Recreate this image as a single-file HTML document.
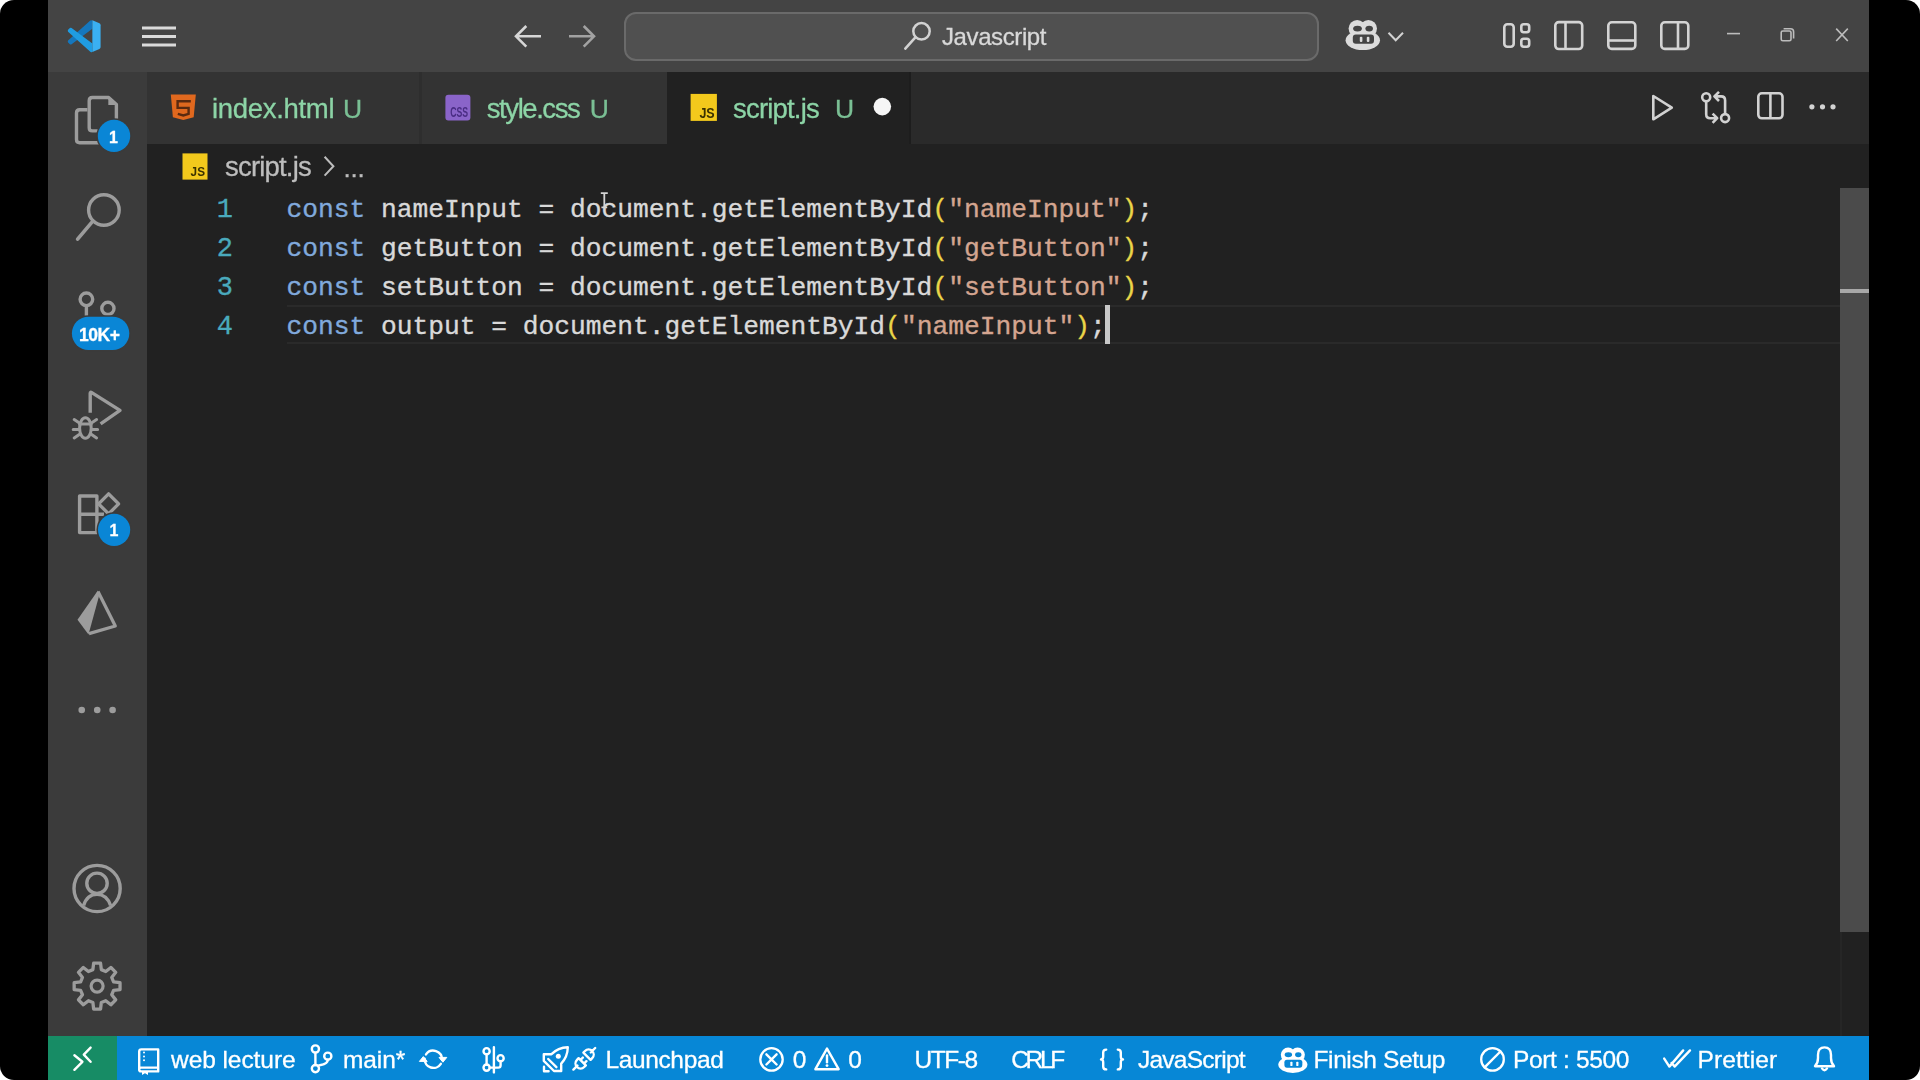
<!DOCTYPE html>
<html><head><meta charset="utf-8">
<style>
*{margin:0;padding:0;box-sizing:border-box}
html,body{width:1920px;height:1080px;overflow:hidden;background:#fff}
body{position:relative;font-family:"Liberation Sans",sans-serif}
.a{position:absolute}
#frame{position:absolute;left:0;top:0;width:1920px;height:1080px;background:#000;border-radius:14px;overflow:hidden;filter:blur(0.45px)}
.t{position:absolute;white-space:pre;line-height:1;-webkit-text-stroke:0.3px currentColor}
.code{position:absolute;left:286.5px;font-family:"Liberation Mono",monospace;font-size:26.25px;white-space:pre;color:#d9d9d9;line-height:39px;height:39px;-webkit-text-stroke:0.35px currentColor}
.ln{position:absolute;font-family:"Liberation Mono",monospace;font-size:27px;color:#4aaabd;line-height:39px;-webkit-text-stroke:0.3px currentColor;width:40px;text-align:right;left:193px}
.k{color:#80a9dc}.s{color:#d4a590}.p{color:#ead548}
svg{position:absolute;left:0;top:0}
</style></head><body>
<div id="frame">
<div class="a" style="left:48px;top:0;width:1821px;height:72px;background:#444444"></div>
<div class="a" style="left:48px;top:72px;width:99px;height:964px;background:#3b3b3b"></div>
<div class="a" style="left:147px;top:72px;width:1722px;height:72px;background:#2a2a2a"></div>
<div class="a" style="left:147px;top:144px;width:1722px;height:892px;background:#212121"></div>
<div class="a" style="left:48px;top:1036px;width:1821px;height:44px;background:#0787d6"></div>
<div class="a" style="left:48px;top:1036px;width:69px;height:44px;background:#178c65"></div>
<div class="a" style="left:147px;top:72px;width:272px;height:72px;background:#333333"></div>
<div class="a" style="left:419px;top:72px;width:2.5px;height:72px;background:#2e2e2e"></div>
<div class="a" style="left:421.5px;top:72px;width:245.5px;height:72px;background:#333333"></div>
<div class="a" style="left:667px;top:72px;width:244px;height:72px;background:#212121"></div>
<div class="a" style="left:908.5px;top:72px;width:2px;height:72px;background:#1d1d1d"></div>
<!-- search box -->
<div class="a" style="left:624px;top:12px;width:695px;height:49px;border-radius:12px;background:#505050;border:2px solid #6a6a6a"></div>
<!-- current line highlight -->
<div class="a" style="left:287px;top:305px;width:1576px;height:39px;border-top:2px solid #2a2a2a;border-bottom:2px solid #2a2a2a"></div>
<!-- scrollbar -->
<div class="a" style="left:1840px;top:188px;width:29px;height:744px;background:#4b4b4b"></div>
<div class="a" style="left:1840px;top:289px;width:29px;height:4px;background:#a8a8a8"></div>
<div class="a" style="left:1840px;top:932px;width:2px;height:104px;background:#262626"></div>
<!-- cursor -->
<div class="a" style="left:1105px;top:305px;width:5px;height:39px;background:#c8c8c8"></div>
<div class="code" style="top:191px"><span class="k">const</span> nameInput = document.getElementById<span class="p">(</span><span class="s">"nameInput"</span><span class="p">)</span>;</div>
<div class="ln" style="top:191px">1</div>
<div class="code" style="top:230px"><span class="k">const</span> getButton = document.getElementById<span class="p">(</span><span class="s">"getButton"</span><span class="p">)</span>;</div>
<div class="ln" style="top:230px">2</div>
<div class="code" style="top:269px"><span class="k">const</span> setButton = document.getElementById<span class="p">(</span><span class="s">"setButton"</span><span class="p">)</span>;</div>
<div class="ln" style="top:269px">3</div>
<div class="code" style="top:308px"><span class="k">const</span> output = document.getElementById<span class="p">(</span><span class="s">"nameInput"</span><span class="p">)</span>;</div>
<div class="ln" style="top:308px">4</div>
<svg width="1920" height="1080" viewBox="0 0 1920 1080"><g transform="translate(67.6 19.8) scale(0.33 0.326)"><path d="M68.8 2.1 L75 1 V27.3 L12.2 75 Q9 77 6.9 74.8 L1.4 69.7 Q-0.5 66 1.4 63.6 Z" fill="#1577bd"/><path d="M6.9 25.2 Q9 23 12.2 25 L75 72.7 V99.1 Q72 100.5 68.8 97.9 L1.4 36.4 Q-0.5 33 1.4 30.3 Z" fill="#1f9ce2"/><path d="M75 1 L96.5 10.8 Q100 12.5 100 16.4 V83.6 Q100 87.5 96.5 89.2 L75 99.1 Z" fill="#3ab0f2"/></g>
<line x1="142" y1="28" x2="176" y2="28" stroke="#dadada" stroke-width="3"/>
<line x1="142" y1="36.5" x2="176" y2="36.5" stroke="#dadada" stroke-width="3"/>
<line x1="142" y1="45" x2="176" y2="45" stroke="#dadada" stroke-width="3"/>
<path d="M541 36.3 H516.5 M526.3 26 L516 36.3 L526.3 46.6" stroke="#d6d6d6" stroke-width="2.6" fill="none"/>
<path d="M569 36.3 H593.5 M583.7 26 L594 36.3 L583.7 46.6" stroke="#a2a2a2" stroke-width="2.6" fill="none"/>
<circle cx="921.5" cy="31.3" r="8.2" stroke="#d2d2d2" stroke-width="2.5" fill="none"/><line x1="915.6" y1="37.2" x2="905.3" y2="48.6" stroke="#d2d2d2" stroke-width="2.6" stroke-linecap="round"/>
<g transform="translate(1345.6 20) scale(1.0)"><circle cx="11.6" cy="8.6" r="8.6" fill="#dcdcdc"/><circle cx="22.8" cy="8.6" r="8.6" fill="#dcdcdc"/><ellipse cx="17.2" cy="20.2" rx="17.2" ry="9.8" fill="#dcdcdc"/><ellipse cx="11.9" cy="8.6" rx="4.4" ry="2.9" fill="#444444"/><ellipse cx="23.6" cy="8.6" rx="3.8" ry="2.9" fill="#444444"/><rect x="7.2" y="14.5" width="21.2" height="9.3" rx="3" fill="#444444"/><rect x="14.2" y="16.7" width="2.6" height="5.3" rx="1" fill="#dcdcdc"/><rect x="21.2" y="16.7" width="2.6" height="5.3" rx="1" fill="#dcdcdc"/></g>
<polyline points="1388.5,32.8 1395.7,40.2 1403,32.8" stroke="#d2d2d2" stroke-width="2" fill="none"/>
<rect x="1504.3" y="24.3" width="9.4" height="22.4" rx="3" stroke="#d4d4d4" stroke-width="2.6" fill="none"/>
<rect x="1521.3" y="24.3" width="7.9" height="7.9" rx="2.4" stroke="#d4d4d4" stroke-width="2.6" fill="none"/><rect x="1521.3" y="38.8" width="7.9" height="7.9" rx="2.4" stroke="#d4d4d4" stroke-width="2.6" fill="none"/>
<rect x="1555.3" y="22.1" width="26.9" height="26.9" rx="3.5" stroke="#d4d4d4" stroke-width="2.6" fill="none"/><line x1="1565.5" y1="22.1" x2="1565.5" y2="49" stroke="#d4d4d4" stroke-width="2.6" fill="none"/>
<rect x="1608.3" y="22.3" width="27" height="26.6" rx="3.5" stroke="#d4d4d4" stroke-width="2.6" fill="none"/><line x1="1608.3" y1="40.5" x2="1635.3" y2="40.5" stroke="#d4d4d4" stroke-width="2.6" fill="none"/>
<rect x="1661.3" y="22.3" width="27" height="26.6" rx="3.5" stroke="#d4d4d4" stroke-width="2.6" fill="none"/><line x1="1678" y1="22.3" x2="1678" y2="48.9" stroke="#d4d4d4" stroke-width="2.6" fill="none"/>
<line x1="1727" y1="33.6" x2="1740" y2="33.6" stroke="#bcbcbc" stroke-width="1.6" fill="none"/>
<rect x="1781.2" y="31" width="9.8" height="9.8" rx="1.6" stroke="#bcbcbc" stroke-width="1.6" fill="none"/><path d="M1783.6 28.7 H1790.6 Q1793.6 28.7 1793.6 31.7 V38.4" stroke="#bcbcbc" stroke-width="1.6" fill="none"/>
<path d="M1836.2 28.6 L1847.8 41 M1847.8 28.6 L1836.2 41" stroke="#bcbcbc" stroke-width="1.6" fill="none"/>
<path d="M170.8 94.4 H195.8 L193.7 117.2 L183.3 119.9 L172.9 117.2 Z" fill="#e0681e"/>
<path d="M190.8 101.3 H177.6 V107.9 H188.6 V113.9 L183.3 115.4 L177.8 113.9" stroke="#5a2a10" stroke-width="2.4" fill="none"/>
<rect x="445.4" y="94.8" width="25" height="25.6" rx="3" fill="#8a64c9"/>
<text x="450.2" y="117.4" font-family="Liberation Sans" font-weight="700" font-size="15.5" fill="#4a2d84" textLength="18" lengthAdjust="spacingAndGlyphs">CSS</text>
<rect x="690.6" y="93.9" width="26.3" height="27" fill="#f3c91c"/><text x="699.4" y="118.0" font-family="Liberation Sans" font-weight="700" font-size="14.5" fill="#3b3200" textLength="15.300000000000068" lengthAdjust="spacingAndGlyphs">JS</text>
<rect x="182.5" y="153.4" width="25" height="26.2" fill="#f3c91c"/><text x="190.6" y="175.9" font-family="Liberation Sans" font-weight="700" font-size="12.5" fill="#3b3200" textLength="14.400000000000006" lengthAdjust="spacingAndGlyphs">JS</text>
<circle cx="882.3" cy="106.6" r="8.8" fill="#f6f6f6"/>
<path d="M1653.3 96 V119.3 L1671.8 107.6 Z" stroke="#d2d2d2" stroke-width="2.6" fill="none" stroke-linejoin="round"/>
<circle cx="1706.2" cy="97.2" r="4" stroke="#d2d2d2" stroke-width="2.6" fill="none" stroke-linejoin="round"/><circle cx="1725.1" cy="118.1" r="4" stroke="#d2d2d2" stroke-width="2.6" fill="none" stroke-linejoin="round"/>
<path d="M1706.2 101.2 V114.2 Q1706.2 118.2 1710.2 118.2 H1717 M1712.6 113.6 L1717.2 118.2 L1712.6 122.8" stroke="#d2d2d2" stroke-width="2.6" fill="none" stroke-linejoin="round"/>
<path d="M1725.1 114.1 V100.4 Q1725.1 96.4 1721.1 96.4 H1714.6 M1719 91.8 L1714.4 96.4 L1719 101" stroke="#d2d2d2" stroke-width="2.6" fill="none" stroke-linejoin="round"/>
<rect x="1758.3" y="93.3" width="24.2" height="25" rx="3.5" stroke="#d2d2d2" stroke-width="2.6" fill="none" stroke-linejoin="round"/><line x1="1770.4" y1="93.3" x2="1770.4" y2="118.3" stroke="#d2d2d2" stroke-width="2.6" fill="none" stroke-linejoin="round"/>
<circle cx="1811.9" cy="106.8" r="2.6" fill="#d2d2d2"/>
<circle cx="1822.5" cy="106.8" r="2.6" fill="#d2d2d2"/>
<circle cx="1833" cy="106.8" r="2.6" fill="#d2d2d2"/>
<polyline points="324.6,156.8 333.4,166.2 324.6,175.6" stroke="#bdbdbd" stroke-width="2" fill="none"/>
<path d="M116.4 126 V104.6 L108.6 97.5 H92.4 Q89.2 97.5 89.2 100.7 V127.7 Q89.2 130.9 92.4 130.9 H104" stroke="#9c9c9c" stroke-width="3.4" fill="none" stroke-linejoin="round"/>
<path d="M108.3 97.4 L116.6 104.9 H108.3 Z" fill="#9c9c9c"/>
<path d="M87.4 109.8 H79.7 Q76.5 109.8 76.5 113 V139.6 Q76.5 142.8 79.7 142.8 H104" stroke="#9c9c9c" stroke-width="3.4" fill="none" stroke-linejoin="round"/>
<circle cx="114" cy="135.9" r="17.7" fill="#3b3b3b"/><circle cx="114" cy="135.9" r="16.2" fill="#0a86d6"/>
<circle cx="103.9" cy="210" r="15.3" stroke="#9c9c9c" stroke-width="3.4" fill="none" stroke-linejoin="round"/><line x1="92.6" y1="221.4" x2="77.6" y2="239.2" stroke="#9c9c9c" stroke-width="3.6" stroke-linecap="round"/>
<circle cx="86.4" cy="299.3" r="6.3" stroke="#9c9c9c" stroke-width="3.4" fill="none" stroke-linejoin="round"/><line x1="86.4" y1="305.6" x2="86.4" y2="320" stroke="#9c9c9c" stroke-width="3.4" fill="none" stroke-linejoin="round"/><circle cx="107.9" cy="308.4" r="6.1" stroke="#9c9c9c" stroke-width="3.4" fill="none" stroke-linejoin="round"/>
<rect x="70.4" y="315.2" width="60.4" height="36.3" rx="18.1" fill="#3b3b3b"/><rect x="71.9" y="316.7" width="57.4" height="33.3" rx="16.6" fill="#0a86d6"/>
<path d="M90.2 412.8 V393.2 Q90.2 391.6 91.8 392.6 L120 410.4 L100.6 423.8" stroke="#9c9c9c" stroke-width="3.4" fill="none" stroke-linejoin="round"/>
<ellipse cx="85.4" cy="428" rx="5.8" ry="10.2" stroke="#9c9c9c" stroke-width="3" fill="none" stroke-linecap="round"/><line x1="79.6" y1="424" x2="91.2" y2="424" stroke="#9c9c9c" stroke-width="3" fill="none" stroke-linecap="round"/>
<path d="M74.2 419.6 L79.4 423 M96.6 419.6 L91.4 423 M73.2 429.4 H79.2 M97.6 429.4 H91.6 M74.2 438 L79.6 434.2 M96.6 438 L91.2 434.2" stroke="#9c9c9c" stroke-width="3" fill="none" stroke-linecap="round"/>
<path d="M79.6 496 H96.9 V532.6 H79.6 Z M79.6 514.3 H104" stroke="#9c9c9c" stroke-width="3.4" fill="none" stroke-linejoin="round"/>
<path d="M108.6 493.9 L118.6 503.9 L108.6 513.9 L98.6 503.9 Z" stroke="#9c9c9c" stroke-width="3.4" fill="none" stroke-linejoin="round"/>
<circle cx="114.1" cy="529.8" r="17.6" fill="#3b3b3b"/><circle cx="114.1" cy="529.8" r="16.1" fill="#0a86d6"/>
<path d="M97.9 590.5 L77.5 619.8 L88.5 634.5 L99.3 595 Z" fill="#9c9c9c"/>
<path d="M98 591.5 L115.3 626 L89 633.6" stroke="#9c9c9c" stroke-width="3.2" fill="none" stroke-linejoin="round"/>
<circle cx="81.75" cy="710" r="3.3" fill="#9c9c9c"/>
<circle cx="97.25" cy="710" r="3.3" fill="#9c9c9c"/>
<circle cx="112.6" cy="710" r="3.3" fill="#9c9c9c"/>
<circle cx="97.1" cy="888.5" r="23.1" stroke="#9c9c9c" stroke-width="3.4" fill="none" stroke-linejoin="round"/><circle cx="97" cy="883.3" r="10.2" stroke="#9c9c9c" stroke-width="3.4" fill="none" stroke-linejoin="round"/>
<path d="M83.6 905.5 C86 898 91 894.4 97 894.4 C103 894.4 108 898 110.6 905.5" stroke="#9c9c9c" stroke-width="3.4" fill="none" stroke-linejoin="round"/>
<polygon points="93.65,963.16 100.55,963.16 101.33,969.63 105.75,971.47 110.88,967.44 115.76,972.32 111.73,977.45 113.57,981.87 120.04,982.65 120.04,989.55 113.57,990.33 111.73,994.75 115.76,999.88 110.88,1004.76 105.75,1000.73 101.33,1002.57 100.55,1009.04 93.65,1009.04 92.87,1002.57 88.45,1000.73 83.32,1004.76 78.44,999.88 82.47,994.75 80.63,990.33 74.16,989.55 74.16,982.65 80.63,981.87 82.47,977.45 78.44,972.32 83.32,967.44 88.45,971.47 92.87,969.63" stroke="#9c9c9c" stroke-width="3.3" fill="none" stroke-linejoin="round"/>
<circle cx="97.1" cy="986.1" r="6.0" stroke="#9c9c9c" stroke-width="3.2" fill="none"/>
<path d="M74.4 1055.2 L82.4 1061.8 L74.4 1069.8 M90.6 1047.6 L83.8 1054.6 L90.6 1061.8" stroke="#ffffff" stroke-width="2.4" fill="none" stroke-linejoin="round" stroke-linecap="round"/>
<path d="M139.2 1070.2 V1051.6 Q139.2 1049.4 141.4 1049.4 H158.2 V1067.6 H141 Q139.2 1067.6 139.2 1069.4 Q139.2 1071.4 141.2 1071.4 H158.2 V1067.6" stroke="#ffffff" stroke-width="2.4" fill="none" stroke-linejoin="round" stroke-linecap="round"/>
<path d="M142.6 1071 V1074 L145 1072.4 L147.4 1074 V1071" fill="#ffffff" stroke="#ffffff" stroke-width="1.2"/>
<circle cx="144" cy="1052.6" r="1" fill="#ffffff"/>
<circle cx="144" cy="1056.4" r="1" fill="#ffffff"/>
<circle cx="144" cy="1060.2" r="1" fill="#ffffff"/>
<circle cx="315.4" cy="1049" r="3.6" stroke="#ffffff" stroke-width="2.4" fill="none" stroke-linejoin="round" stroke-linecap="round"/><circle cx="315.4" cy="1068.6" r="3.6" stroke="#ffffff" stroke-width="2.4" fill="none" stroke-linejoin="round" stroke-linecap="round"/><circle cx="327.8" cy="1056.2" r="3.6" stroke="#ffffff" stroke-width="2.4" fill="none" stroke-linejoin="round" stroke-linecap="round"/>
<path d="M315.4 1052.6 V1065 M327.8 1059.8 Q327.8 1064.4 318 1065.6" stroke="#ffffff" stroke-width="2.4" fill="none" stroke-linejoin="round" stroke-linecap="round"/>
<path d="M426.0 1054.4 A8.8 8.8 0 0 1 441.97 1059.8" stroke="#ffffff" stroke-width="2.4" fill="none" stroke-linejoin="round" stroke-linecap="round"/><path d="M439.0 1057.4 H446.8 L442.9 1062.2 Z" fill="#ffffff" stroke="#ffffff" stroke-width="1" stroke-linejoin="round"/>
<path d="M440.84 1063.83 A8.8 8.8 0 0 1 424.63 1058.8" stroke="#ffffff" stroke-width="2.4" fill="none" stroke-linejoin="round" stroke-linecap="round"/><path d="M419.4 1061.4 H427.2 L423.3 1056.6 Z" fill="#ffffff" stroke="#ffffff" stroke-width="1" stroke-linejoin="round"/>
<circle cx="486.6" cy="1051.2" r="3.1" stroke="#ffffff" stroke-width="2.4" fill="none" stroke-linejoin="round" stroke-linecap="round"/><circle cx="486.6" cy="1067.6" r="3.1" stroke="#ffffff" stroke-width="2.4" fill="none" stroke-linejoin="round" stroke-linecap="round"/><circle cx="500.6" cy="1058.2" r="3.1" stroke="#ffffff" stroke-width="2.4" fill="none" stroke-linejoin="round" stroke-linecap="round"/>
<path d="M486.6 1054.3 V1064.5 M493.9 1047.2 V1072.4 M500.6 1061.3 V1065.2 Q500.6 1067.6 498.2 1067.6 H489.7" stroke="#ffffff" stroke-width="2.4" fill="none" stroke-linejoin="round" stroke-linecap="round"/>
<path d="M543.8 1054.2 H551.5 Q558 1047.6 567.8 1047.3 Q567.6 1057 561.2 1063.6 V1071 H554 L543.8 1060.8 Z M548.2 1059 L556.4 1067.2" stroke="#ffffff" stroke-width="2.4" fill="none" stroke-linejoin="round" stroke-linecap="round"/>
<circle cx="558.3" cy="1056.3" r="2.5" fill="#ffffff"/>
<path d="M544 1066.8 V1071.2 H548.6" stroke="#ffffff" stroke-width="2.4" fill="none" stroke-linejoin="round" stroke-linecap="round"/>
<path d="M578.6 1058.2 L585.8 1065.4 L584.2 1067 A5.09 5.09 0 0 1 577 1059.8 Z M580.4 1060 L582.8 1057.6 M584 1063.6 L586.4 1061.2 M573.4 1069.6 L577.4 1065.6" stroke="#ffffff" stroke-width="2.4" fill="none" stroke-linejoin="round" stroke-linecap="round"/>
<path d="M583.4 1052.6 L590.6 1059.8 L592.2 1058.2 A5.09 5.09 0 0 0 585 1051 Z M590.8 1052.4 L595.2 1048" stroke="#ffffff" stroke-width="2.4" fill="none" stroke-linejoin="round" stroke-linecap="round"/>
<circle cx="771.5" cy="1059.4" r="11.2" stroke="#ffffff" stroke-width="2.3" fill="none"/><path d="M766.4 1054.3 L776.6 1064.5 M776.6 1054.3 L766.4 1064.5" stroke="#ffffff" stroke-width="2.4" fill="none" stroke-linejoin="round" stroke-linecap="round"/>
<path d="M827 1048.6 L838.6 1069.2 H815.4 Z" stroke="#ffffff" stroke-width="2.4" fill="none" stroke-linejoin="round" stroke-linecap="round"/><line x1="827" y1="1055.4" x2="827" y2="1062.2" stroke="#ffffff" stroke-width="2.4" fill="none" stroke-linejoin="round" stroke-linecap="round"/><circle cx="827" cy="1065.6" r="1.4" fill="#ffffff"/>
<path d="M1106.2 1049.6 Q1103.2 1049.6 1103.2 1052.6 V1056.6 Q1103.2 1059.4 1101 1059.4 Q1103.2 1059.4 1103.2 1062.2 V1066.4 Q1103.2 1069.4 1106.2 1069.4 M1117.8 1049.6 Q1120.8 1049.6 1120.8 1052.6 V1056.6 Q1120.8 1059.4 1123 1059.4 Q1120.8 1059.4 1120.8 1062.2 V1066.4 Q1120.8 1069.4 1117.8 1069.4" stroke="#ffffff" stroke-width="2.4" fill="none" stroke-linejoin="round" stroke-linecap="round"/>
<g transform="translate(1278.3 1047.5) scale(0.846)"><circle cx="11.6" cy="8.6" r="8.6" fill="#ffffff"/><circle cx="22.8" cy="8.6" r="8.6" fill="#ffffff"/><ellipse cx="17.2" cy="20.2" rx="17.2" ry="9.8" fill="#ffffff"/><ellipse cx="11.9" cy="8.6" rx="4.4" ry="2.9" fill="#0787d6"/><ellipse cx="23.6" cy="8.6" rx="3.8" ry="2.9" fill="#0787d6"/><rect x="7.2" y="14.5" width="21.2" height="9.3" rx="3" fill="#0787d6"/><rect x="14.2" y="16.7" width="2.6" height="5.3" rx="1" fill="#ffffff"/><rect x="21.2" y="16.7" width="2.6" height="5.3" rx="1" fill="#ffffff"/></g>
<circle cx="1492.5" cy="1059.4" r="11.3" stroke="#ffffff" stroke-width="2.3" fill="none"/><line x1="1484.6" y1="1067.3" x2="1500.4" y2="1051.5" stroke="#ffffff" stroke-width="2.4" fill="none" stroke-linejoin="round" stroke-linecap="round"/>
<path d="M1664.2 1058.6 L1669.4 1066.6 L1683.2 1050.4 M1671.6 1063 L1674.6 1066.6 L1690 1050.4" stroke="#ffffff" stroke-width="2.4" fill="none" stroke-linejoin="round" stroke-linecap="round"/>
<path d="M1815 1066.2 H1834 Q1831 1063.2 1831 1058 V1055 Q1831 1047.4 1824.5 1047.4 Q1818 1047.4 1818 1055 V1058 Q1818 1063.2 1815 1066.2 Z" stroke="#ffffff" stroke-width="2.4" fill="none" stroke-linejoin="round" stroke-linecap="round"/><path d="M1822 1068.4 Q1824.5 1072 1827 1068.4" stroke="#ffffff" stroke-width="2.4" fill="none" stroke-linejoin="round" stroke-linecap="round"/>
<path d="M600.8 193.2 H607.8 M604.3 193.2 V207.4 M601.4 207.4 H607.2" stroke="#d4d4d4" stroke-width="1.8" fill="none"/></svg>
<div class="t" style="left:212.00px;top:95.42px;font-size:27.5px;color:#8cd4a6;font-family:'Liberation Sans';letter-spacing:-0.314px;">index.html</div>
<div class="t" style="left:343.00px;top:96.27px;font-size:26.5px;color:#7abf94;font-family:'Liberation Sans';">U</div>
<div class="t" style="left:486.80px;top:95.42px;font-size:27.5px;color:#8cd4a6;font-family:'Liberation Sans';letter-spacing:-1.436px;">style.css</div>
<div class="t" style="left:589.80px;top:96.27px;font-size:26.5px;color:#7abf94;font-family:'Liberation Sans';">U</div>
<div class="t" style="left:733.00px;top:95.42px;font-size:27.5px;color:#8cd4a6;font-family:'Liberation Sans';letter-spacing:-0.806px;">script.js</div>
<div class="t" style="left:835.00px;top:96.27px;font-size:26.5px;color:#7abf94;font-family:'Liberation Sans';">U</div>
<div class="t" style="left:225.00px;top:153.47px;font-size:27.5px;color:#bdbdbd;font-family:'Liberation Sans';letter-spacing:-0.806px;">script.js</div>
<div class="t" style="left:343.60px;top:154.74px;font-size:26px;color:#bdbdbd;font-family:'Liberation Sans';letter-spacing:-0.274px;">...</div>
<div class="t" style="left:942.00px;top:25.08px;font-size:24px;color:#d9d9d9;font-family:'Liberation Sans';letter-spacing:-0.396px;">Javascript</div>
<div class="t" style="left:171.00px;top:1047.76px;font-size:24.5px;color:#ffffff;font-family:'Liberation Sans';letter-spacing:-0.066px;">web lecture</div>
<div class="t" style="left:342.90px;top:1047.76px;font-size:24.5px;color:#ffffff;font-family:'Liberation Sans';letter-spacing:-0.051px;">main*</div>
<div class="t" style="left:605.40px;top:1047.76px;font-size:24.5px;color:#ffffff;font-family:'Liberation Sans';letter-spacing:-0.354px;">Launchpad</div>
<div class="t" style="left:792.80px;top:1047.76px;font-size:24.5px;color:#ffffff;font-family:'Liberation Sans';">0</div>
<div class="t" style="left:848.30px;top:1047.76px;font-size:24.5px;color:#ffffff;font-family:'Liberation Sans';">0</div>
<div class="t" style="left:914.40px;top:1047.76px;font-size:24.5px;color:#ffffff;font-family:'Liberation Sans';letter-spacing:-1.396px;">UTF-8</div>
<div class="t" style="left:1011.20px;top:1047.76px;font-size:24.5px;color:#ffffff;font-family:'Liberation Sans';letter-spacing:-3.304px;">CRLF</div>
<div class="t" style="left:1138.00px;top:1047.76px;font-size:24.5px;color:#ffffff;font-family:'Liberation Sans';letter-spacing:-0.752px;">JavaScript</div>
<div class="t" style="left:1313.50px;top:1047.76px;font-size:24.5px;color:#ffffff;font-family:'Liberation Sans';letter-spacing:-0.387px;">Finish Setup</div>
<div class="t" style="left:1513.00px;top:1047.76px;font-size:24.5px;color:#ffffff;font-family:'Liberation Sans';letter-spacing:-0.348px;">Port : 5500</div>
<div class="t" style="left:1697.50px;top:1047.76px;font-size:24.5px;color:#ffffff;font-family:'Liberation Sans';letter-spacing:0.099px;">Prettier</div>
<div class="t" style="left:109.00px;top:130.16px;font-size:16px;color:#ffffff;font-family:'Liberation Sans';font-weight:700;">1</div>
<div class="t" style="left:109.50px;top:522.96px;font-size:16px;color:#ffffff;font-family:'Liberation Sans';font-weight:700;">1</div>
<div class="t" style="left:79.00px;top:326.69px;font-size:17.5px;color:#ffffff;font-family:'Liberation Sans';font-weight:700;letter-spacing:-0.468px;">10K+</div>
</div>
</body></html>
